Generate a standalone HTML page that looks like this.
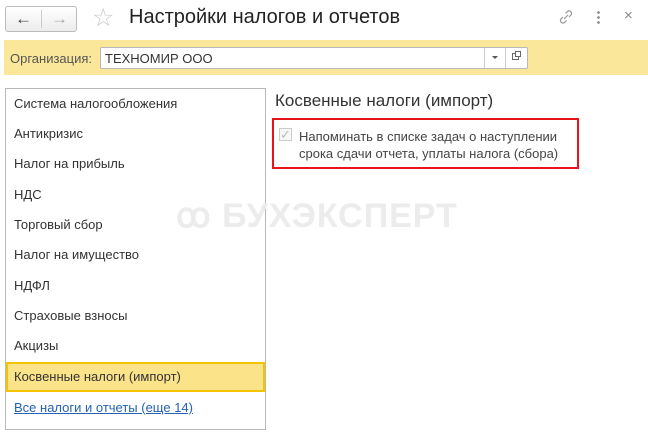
<!DOCTYPE html>
<html><head><meta charset="utf-8"><style>
body{margin:0;width:648px;height:435px;background:#fff;font-family:"Liberation Sans",Arial,sans-serif;position:relative;overflow:hidden;color:#333}
.a{position:absolute}
.nav{left:5px;top:6px;width:72px;height:26px;border:1px solid #bcbcbc;border-radius:3px;background:linear-gradient(#fff,#ececec);box-sizing:border-box}
.nav span{position:absolute;top:2px;font-size:17px;color:#444}
.item{position:absolute;left:14px;font-size:13px;color:#333}
</style></head><body>
<div class="a nav"><span style="left:9px">&#8592;</span><div class="a" style="left:35px;top:3px;width:1px;height:18px;background:#ccc"></div><span style="left:45px;color:#aaa">&#8594;</span></div>
<div class="a" style="left:92px;top:3px;font-size:25px;color:#c8c8c8">&#9734;</div>
<div class="a" style="left:129px;top:6px;font-size:20px;color:#222">Настройки налогов и отчетов</div>
<svg class="a" style="left:557px;top:8px" width="18" height="18" viewBox="0 0 18 18"><path d="M7 11l4-4M6 9l-2 2a2.5 2.5 0 0 0 3.5 3.5l2-2M12 9l2-2a2.5 2.5 0 0 0-3.5-3.5l-2 2" stroke="#999" stroke-width="1.2" fill="none"/></svg>
<div class="a" style="left:597px;top:10px;width:3px;height:14px;background:radial-gradient(circle,#888 1.2px,transparent 1.5px) 0 0/3px 5px"></div>
<div class="a" style="left:624px;top:7px;font-size:15px;color:#888">×</div>
<div class="a" style="left:4px;top:40px;width:644px;height:35px;background:#fbe79a"></div>
<div class="a" style="left:10px;top:51px;font-size:13px;color:#555">Организация:</div>
<div class="a" style="left:100px;top:47px;width:428px;height:22px;border:1px solid #b8b8b8;background:#fff;box-sizing:border-box;border-radius:2px"></div>
<div class="a" style="left:105px;top:51px;font-size:13px;color:#333">ТЕХНОМИР ООО</div>
<div class="a" style="left:484px;top:48px;width:1px;height:20px;background:#ccc"></div>
<div class="a" style="left:505px;top:48px;width:1px;height:20px;background:#ccc"></div>
<div class="a" style="left:492px;top:56px;border:3px solid transparent;border-top:3px solid #555;border-bottom:0"></div>
<div class="a" style="left:512px;top:53px;width:7px;height:7px;border:1px solid #666;box-sizing:border-box"></div>
<div class="a" style="left:515px;top:51px;width:6px;height:6px;border:1px solid #666;background:#fff;box-sizing:border-box"></div>
<div class="a" style="left:5px;top:88px;width:261px;height:342px;border:1px solid #b8b8b8;box-sizing:border-box"></div>
<div class="item" style="top:96px">Система налогообложения</div>
<div class="item" style="top:126px">Антикризис</div>
<div class="item" style="top:156px">Налог на прибыль</div>
<div class="item" style="top:187px">НДС</div>
<div class="item" style="top:217px">Торговый сбор</div>
<div class="item" style="top:247px">Налог на имущество</div>
<div class="item" style="top:278px">НДФЛ</div>
<div class="item" style="top:308px">Страховые взносы</div>
<div class="item" style="top:338px">Акцизы</div>
<div class="a" style="left:6px;top:362px;width:259px;height:30px;background:#fbe38a;border:2px solid #f5c400;box-sizing:border-box"></div>
<div class="item" style="top:369px">Косвенные налоги (импорт)</div>
<div class="item" style="top:400px;color:#2462b5;text-decoration:underline">Все налоги и отчеты (еще 14)</div>
<div class="a" style="left:176px;top:196px;font-size:34px;font-weight:bold;color:#ececec;letter-spacing:1px">ꝏ БУХЭКСПЕРТ</div>
<div class="a" style="left:275px;top:91px;font-size:17px;color:#333">Косвенные налоги (импорт)</div>
<div class="a" style="left:272px;top:118px;width:307px;height:51px;border:2px solid #e8141c;box-sizing:border-box"></div>
<div class="a" style="left:279px;top:128px;width:13px;height:13px;border:1px solid #ccc;box-sizing:border-box;background:#f7f7f7;color:#bbb;font-size:13px;line-height:11px;text-align:center">✓</div>
<div class="a" style="left:299px;top:128px;font-size:13px;line-height:17px;color:#444">Напоминать в списке задач о наступлении<br>срока сдачи отчета, уплаты налога (сбора)</div>
</body></html>
